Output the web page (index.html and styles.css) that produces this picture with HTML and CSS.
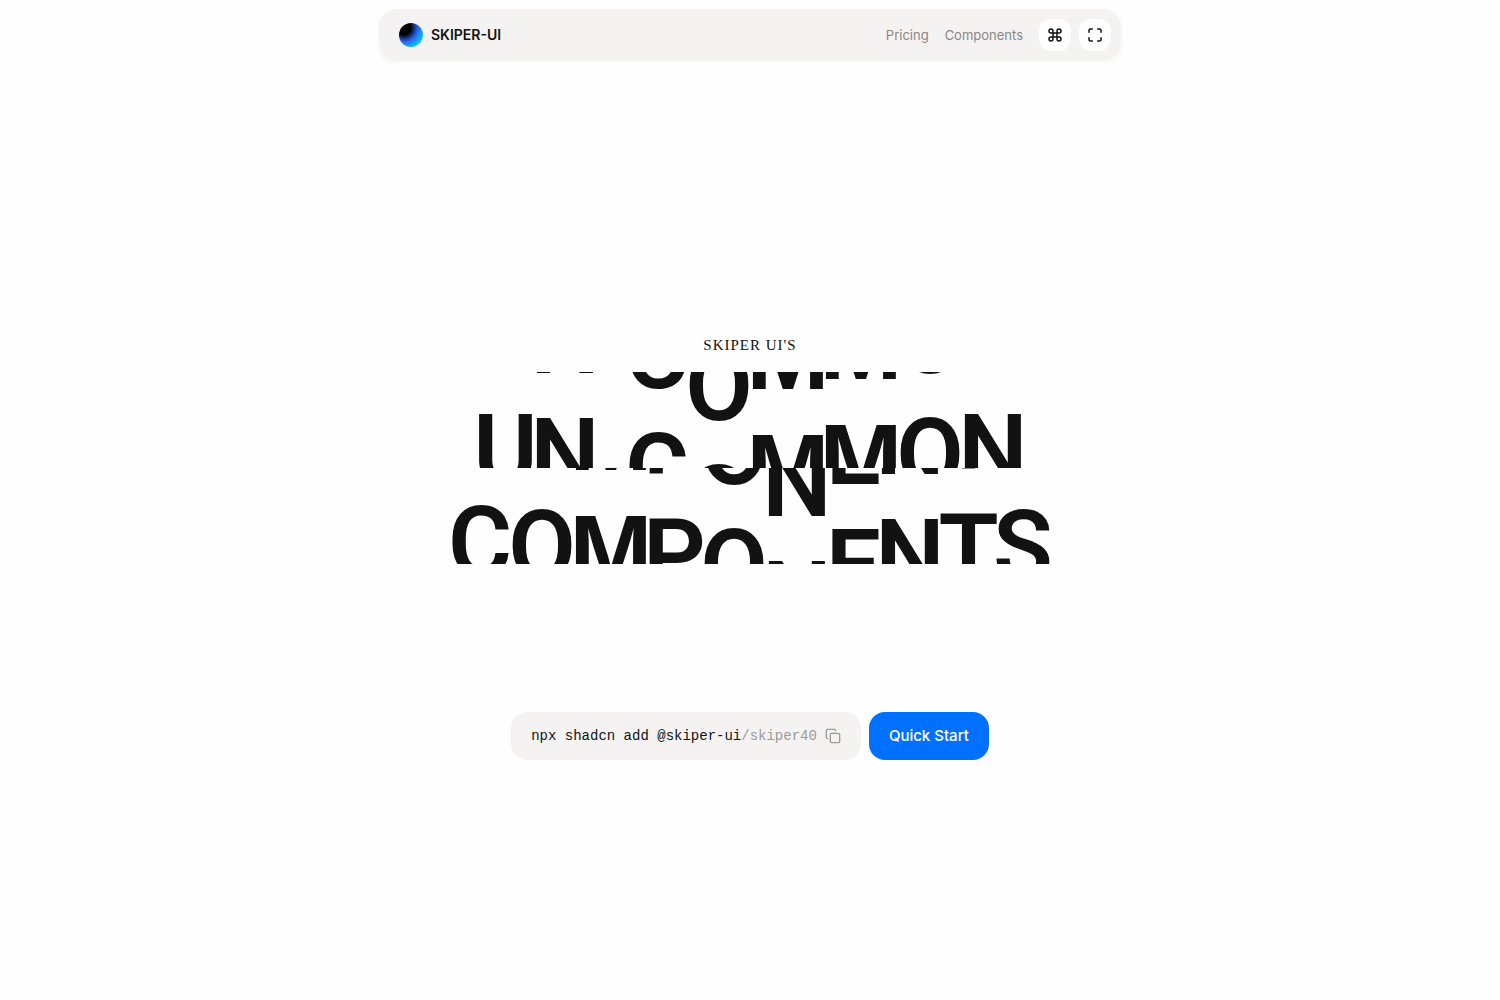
FILE: index.html
```html
<!DOCTYPE html>
<html lang="en">
<head>
<meta charset="utf-8">
<meta name="viewport" content="width=device-width, initial-scale=1">
<title>Skiper UI</title>
<link rel="stylesheet" href="styles.css">
</head>
<body>
<header class="site-header">
  <nav class="navbar" aria-label="Main">
    <a class="brand" href="#"><span class="brand-mark"></span>SKIPER-UI</a>
    <div class="nav-items">
      <a class="nav-link" href="#pricing">Pricing</a>
      <a class="nav-link" href="#components">Components</a>
      <div class="nav-actions">
        <button class="icon-button" type="button" aria-label="Command menu">
          <svg viewBox="0 0 24 24" class="icon"><path d="M15 6v12a3 3 0 1 0 3-3H6a3 3 0 1 0 3 3V6a3 3 0 1 0-3 3h12a3 3 0 1 0-3-3"/></svg>
        </button>
        <button class="icon-button" type="button" aria-label="Fullscreen">
          <svg viewBox="0 0 24 24" class="icon"><path d="M8 3H5a2 2 0 0 0-2 2v3M21 8V5a2 2 0 0 0-2-2h-3M3 16v3a2 2 0 0 0 2 2h3M16 21h3a2 2 0 0 0 2-2v-3"/></svg>
        </button>
      </div>
    </div>
  </nav>
</header>
<main class="hero">
  <p class="eyebrow">SKIPER UI'S</p>
  <h1 class="title">
    <span class="roll-line">
      <span class="roll u step-4"><span>U</span><span>U</span></span>
      <span class="roll n step-3"><span>N</span><span>N</span></span>
      <span class="roll dash step-1"><span>-</span><span>-</span></span>
      <span class="roll c step-1"><span>C</span><span>C</span></span>
      <span class="roll o step-0"><span>O</span><span>O</span></span>
      <span class="roll m step-1"><span>M</span><span>M</span></span>
      <span class="roll m step-2"><span>M</span><span>M</span></span>
      <span class="roll o step-3"><span>O</span><span>O</span></span>
      <span class="roll n step-4"><span>N</span><span>N</span></span>
    </span>
    <span class="roll-line">
      <span class="roll c step-5"><span>C</span><span>C</span></span>
      <span class="roll o step-4"><span>O</span><span>O</span></span>
      <span class="roll m step-3"><span>M</span><span>M</span></span>
      <span class="roll p step-2"><span>P</span><span>P</span></span>
      <span class="roll o step-1"><span>O</span><span>O</span></span>
      <span class="roll n step-0"><span>N</span><span>N</span></span>
      <span class="roll e step-1"><span>E</span><span>E</span></span>
      <span class="roll n step-2"><span>N</span><span>N</span></span>
      <span class="roll t step-3"><span>T</span><span>T</span></span>
      <span class="roll s step-4"><span>S</span><span>S</span></span>
    </span>
  </h1>
  <div class="actions">
    <div class="command">
      <code>npx shadcn add @skiper-ui<span class="muted">/skiper40</span></code>
      <button class="copy" type="button" aria-label="Copy command">
        <svg viewBox="0 0 24 24" class="icon"><rect x="8" y="8" width="14" height="14" rx="2"/><path d="M4 16c-1.100 0-2-.9-2-2V4c0-1.100.9-2 2-2h10c1.100 0 2 .9 2 2"/></svg>
      </button>
    </div>
    <a class="primary" href="#start">Quick Start</a>
  </div>
</main>
</body>
</html>
```
FILE: styles.css
```css
* { box-sizing: border-box; }

body {
  margin: 0;
  min-height: 100vh;
  display: flex;
  flex-direction: column;
  background: #fefefe;
  color: #121212;
  font-family: Inter, "Liberation Sans", sans-serif;
  line-height: 20px;
}

a { color: inherit; text-decoration: none; }

button {
  border: 0;
  padding: 0;
  color: inherit;
  cursor: pointer;
}

.icon {
  display: block;
  width: 16px;
  height: 16px;
  fill: none;
  stroke: currentColor;
  stroke-width: 2;
  stroke-linecap: round;
  stroke-linejoin: round;
}

.site-header {
  display: flex;
  justify-content: center;
  padding: 9px 16px 2px;
  overflow: hidden;
}

.navbar {
  display: flex;
  align-items: center;
  justify-content: space-between;
  width: 100%;
  max-width: 742px;
  height: 52px;
  padding: 0 10px 0 20px;
  border-radius: 18px;
  background: #f4f3f2;
  box-shadow: 0 1px 0 #ffffff, 0 2px 4px rgba(0, 0, 0, 0.06);
}

.brand {
  display: flex;
  align-items: center;
  gap: 8px;
  font-size: 14px;
  font-weight: 600;
}

.brand-mark {
  width: 24px;
  height: 24px;
  border-radius: 50%;
  background: radial-gradient(circle at 20% 20%, #000 25%, #2b68ee 52%, #00d0ff 80%);
}

.nav-items {
  display: flex;
  align-items: center;
  gap: 16px;
}

.nav-link {
  color: #888786;
  font-size: 13px;
}

.nav-actions { display: flex; gap: 8px; }

.icon-button {
  display: grid;
  place-items: center;
  width: 32px;
  height: 32px;
  border-radius: 12px;
  background: #fefefe;
}

.icon-button .icon { stroke-width: 2.250; }

.hero {
  flex: 1;
  display: flex;
  flex-direction: column;
  align-items: center;
  padding: 272px 16px 0;
}

.eyebrow {
  margin: 0;
  font: 500 15px/20px "Liberation Serif", serif;
  letter-spacing: 1px;
}

.title {
  margin: 17px 0 148px;
  font: 600 98px/115px Roboto, "Liberation Sans", sans-serif;
}

.roll-line {
  display: flex;
  justify-content: center;
  height: 96px;
  overflow: hidden;
}

.roll {
  display: flex;
  flex-direction: column;
  align-items: center;
}

.u { width: 58px; }
.n { width: 61px; }
.dash { width: 32px; }
.c { width: 59px; }
.o { width: 65px; }
.m {
  width: 73px;
  font-family: "Liberation Sans", sans-serif;
  font-size: 100px;
}
.p { width: 54px; }
.e { width: 52px; }
.t { width: 56px; }
.s { width: 53px; }

/* Roll progress: the letters furthest from the centre are furthest along. */
.step-0 { transform: translateY(-43px); }
.step-1 { transform: translateY(-75px); }
.step-2 { transform: translateY(-85px); }
.step-3 { transform: translateY(-90px); }
.step-4 { transform: translateY(-94px); }
.step-5 { transform: translateY(-98px); }

.actions {
  display: flex;
  flex-wrap: wrap;
  justify-content: center;
  gap: 8px;
}

.command {
  display: flex;
  align-items: center;
  gap: 8px;
  height: 48px;
  padding: 0 20px;
  border-radius: 16px;
  background: #f4f3f2;
}

.command code { font: 14px/20px "Liberation Mono", monospace; }

.muted, .copy { color: #9c9b9a; }

.copy { background: none; }

.primary {
  display: flex;
  align-items: center;
  height: 48px;
  padding: 0 20px;
  border-radius: 16px;
  background: #0070ff;
  color: #fefefe;
  font-size: 15px;
  font-weight: 500;
}
```
